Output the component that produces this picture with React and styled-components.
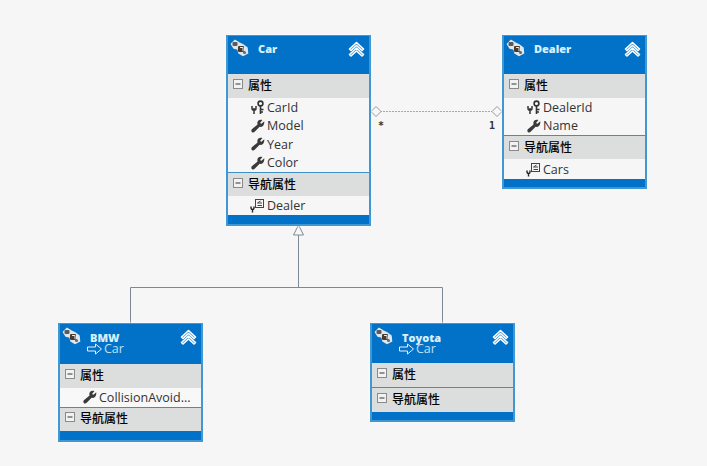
import React from "react";
import styled, { createGlobalStyle } from "styled-components";

const Global = createGlobalStyle`
  html, body { margin: 0; padding: 0; background: #f6f6f7; }
  #root { width: 707px; height: 466px; overflow: hidden; }
`;

const Canvas = styled.div`
  position: relative;
  width: 707px;
  height: 466px;
  background: #f6f6f7;
  overflow: hidden;
  font-family: "Open Sans", "Noto Sans CJK SC", sans-serif;
`;

const Connectors = styled.svg`
  position: absolute;
  left: 0;
  top: 0;
`;

const Entity = styled.div`
  position: absolute;
  left: ${(p) => p.$x}px;
  top: ${(p) => p.$y}px;
  width: 145px;
  box-sizing: border-box;
  display: flex;
  flex-direction: column;
  border: 2px solid #3f97d3;
  border-top-width: 1px;
  background: #f6f6f7;
  box-shadow: 0 0 3px rgba(255, 255, 255, 0.9);
`;

const Header = styled.div`
  height: ${(p) => p.$h}px;
  background: #0272c8;
  display: flex;
  align-items: flex-start;
  padding: 3px 4px 0 2px;
  box-sizing: border-box;
`;

const HeaderText = styled.div`
  flex: 1;
  margin-left: 8px;
  display: flex;
  flex-direction: column;
`;

const Title = styled.div`
  color: #d8effd;
  font-family: "Open Sans", sans-serif;
  font-weight: 800;
  font-size: 11px;
  line-height: 11px;
  margin-top: ${(p) => p.$top}px;
`;

const Base = styled.div`
  display: flex;
  align-items: center;
  gap: 1px;
  margin-left: -3px;
  color: #bfe0f6;
  font-size: 12.5px;
  line-height: 12px;
`;

const Section = styled.div`
  height: ${(p) => p.$h || 24}px;
  background: #dcdddd;
  display: flex;
  align-items: center;
  gap: 1px;
  padding: 0 0 3px 5px;
  color: #000;
  font-size: 12px;
  font-weight: 500;
  font-family: "Noto Sans CJK SC", sans-serif;
  box-sizing: border-box;
  border-top: ${(p) => (p.$rule ? "1px solid #3f8fc4" : "0")};
`;

const Rows = styled.div`
  display: flex;
  flex-direction: column;
  background: #f6f6f7;
`;

const Row = styled.div`
  height: ${(p) => p.$h || 18.5}px;
  display: flex;
  align-items: center;
  padding-left: 22px;
  color: #333;
  font-size: 12.5px;
  white-space: nowrap;
  background: ${(p) => p.$bg || "transparent"};
`;

const IconSlot = styled.span`
  width: 16px;
  height: 16px;
  margin-right: 1px;
  display: inline-flex;
  align-items: center;
  justify-content: center;
  flex: none;
`;

const Footer = styled.div`
  height: ${(p) => p.$h}px;
  background: #0272c8;
`;

const Mult = styled.span`
  position: absolute;
  left: ${(p) => p.$x}px;
  top: ${(p) => p.$y}px;
  font-family: "DejaVu Sans Mono", monospace;
  font-weight: 700;
  font-size: 10px;
  line-height: 12px;
  color: #333;
`;

const EntityIcon = () => (
  <svg width="20" height="18" viewBox="0 0 20 18" style={{ flex: "none" }}>
    <path d="M1.5 5 L5 1.5 L9 4 L13 6 L17 9 L17.5 14 L13 16.5 L9 14 L8 10 L4 9 Z" fill="#dfe8ee" stroke="#dfe8ee" strokeWidth="1.5" />
    <rect x="2.5" y="3" width="5" height="4" rx="1" fill="#5a5a5a" />
    <rect x="8" y="7" width="6" height="6" rx="1" fill="#4c3a2c" />
    <path d="M10 8.5h3v3.5" stroke="#dfe8ee" strokeWidth="1" fill="none" />
    <circle cx="14.5" cy="13.5" r="1.5" fill="#666" />
  </svg>
);

const Chevrons = () => (
  <svg width="17" height="17" viewBox="0 0 17 17" style={{ flex: "none", marginTop: 2 }}>
    <path d="M1.5 8 L8.5 1.5 L15.5 8 L14 9.5 L8.5 4.5 L3 9.5 Z" fill="#4b95cf" stroke="#fff" strokeWidth="1.6" strokeLinejoin="round" />
    <path d="M1.5 13.5 L8.5 7 L15.5 13.5 L14 15 L8.5 10 L3 15 Z" fill="#4b95cf" stroke="#fff" strokeWidth="1.6" strokeLinejoin="round" />
  </svg>
);

const MinusBox = () => (
  <svg width="11" height="11" viewBox="0 0 11 11" style={{ flex: "none", marginRight: 3 }}>
    <rect x="0.5" y="0.5" width="9" height="9" fill="#f2f2f2" stroke="#8a8a8a" />
    <path d="M2.5 5h5" stroke="#333" strokeWidth="1" />
  </svg>
);

const Wrench = () => (
  <svg width="14" height="14" viewBox="0 0 13 13">
    <path d="M12.3 2 L9.7 4.4 L8.4 3.6 L10.6 1 C8.4 0 6 1.2 5.9 3.4 C5.8 4.2 6 4.6 6.1 5 L0.8 9.6 C0 10.6 0.2 11.6 1 12.2 C1.6 12.8 2.7 12.6 3.4 11.9 L8 7.2 C10.2 7.8 12.8 6 12.3 2 Z" fill="#3a3a3a" />
  </svg>
);

const KeyWrench = () => (
  <svg width="14" height="15" viewBox="0 0 14 15">
    <circle cx="9.5" cy="3.5" r="2.4" fill="none" stroke="#333" strokeWidth="1.6" />
    <path d="M9.5 6v8 M9.5 9.5h3 M9.5 12h2.5" stroke="#333" strokeWidth="1.6" />
    <path d="M1 6v2.2c0 1.4 1 2 2 2s2-.6 2-2V6 M3 8v6" stroke="#333" strokeWidth="1.5" fill="none" />
  </svg>
);

const NavIcon = () => (
  <svg width="16" height="15" viewBox="0 0 16 15">
    <rect x="5.5" y="1.5" width="8" height="8" fill="#f6f6f7" stroke="#444" />
    <path d="M10.5 3 L7.500 5 H12 M7.500 7.500h4.500" stroke="#444" fill="none" />
    <path d="M1 8.500v1.500c0 1 1 1.500 1.500 1.500s1.500-.5 1.500-1.500V8.500 M2.500 11v3.500" stroke="#222" strokeWidth="1.4" fill="none" />
  </svg>
);

const InheritArrow = () => (
  <svg width="16" height="12" viewBox="0 0 16 12" style={{ flex: "none" }}>
    <path d="M0.5 4h8V1L14.5 6 8.500 11V8H0.500Z" fill="#0272c8" stroke="#e4f2fb" strokeWidth="1" />
  </svg>
);

const icons = { key: <KeyWrench />, wrench: <Wrench />, nav: <NavIcon /> };

const Prop = ({ icon, children, ...rest }) => (
  <Row {...rest}>
    <IconSlot>{icons[icon]}</IconSlot>
    {children}
  </Row>
);

const SectionHead = ({ children, ...rest }) => (
  <Section {...rest}>
    <MinusBox />
    {children}
  </Section>
);

const Head = ({ name, base, h }) => (
  <Header $h={h}>
    <EntityIcon />
    <HeaderText>
      <Title $top={base ? 5 : 4}>{name}</Title>
      {base && (
        <Base>
          <InheritArrow />
          {base}
        </Base>
      )}
    </HeaderText>
    <Chevrons />
  </Header>
);

export default function App() {
  return (
    <Canvas>
      <Global />
      <Connectors width="707" height="466" viewBox="0 0 707 466">
        <path d="M380 111.500H492" stroke="#a9a9a9" strokeWidth="1" strokeDasharray="2 1" fill="none" />
        <path d="M371 111.500l5-5 5 5-5 5z M492 111.500l5-5 5 5-5 5z" fill="#f7f7f7" stroke="#9a9a9a" />
        <path d="M298.500 235V287.500 M130.500 323V287.500H442.500V323" stroke="#7d8a96" strokeWidth="1" fill="none" />
        <path d="M298.500 225l5 10h-10z" fill="#f7f7f7" stroke="#7d8a96" />
      </Connectors>

      <Entity $x={226} $y={35}>
        <Head name="Car" h={38} />
        <SectionHead>属性</SectionHead>
        <Rows>
          <Prop icon="key">CarId</Prop>
          <Prop icon="wrench">Model</Prop>
          <Prop icon="wrench">Year</Prop>
          <Prop icon="wrench">Color</Prop>
        </Rows>
        <SectionHead $rule>导航属性</SectionHead>
        <Rows>
          <Prop icon="nav" $h={19}>Dealer</Prop>
        </Rows>
        <Footer $h={9} />
      </Entity>

      <Entity $x={502} $y={35}>
        <Head name="Dealer" h={38} />
        <SectionHead>属性</SectionHead>
        <Rows>
          <Prop icon="key">DealerId</Prop>
          <Prop icon="wrench">Name</Prop>
        </Rows>
        <SectionHead $rule>导航属性</SectionHead>
        <Rows>
          <Prop icon="nav" $h={20}>Cars</Prop>
        </Rows>
        <Footer $h={8} />
      </Entity>

      <Entity $x={58} $y={323}>
        <Head name="BMW" base="Car" h={40} />
        <SectionHead>属性</SectionHead>
        <Rows>
          <Prop icon="wrench" $bg="#f8f8f8">CollisionAvoid...</Prop>
        </Rows>
        <SectionHead $rule>导航属性</SectionHead>
        <Footer $h={9} />
      </Entity>

      <Entity $x={370} $y={323}>
        <Head name="Toyota" base="Car" h={39} />
        <SectionHead>属性</SectionHead>
        <SectionHead $rule $h={25}>导航属性</SectionHead>
        <Footer $h={8} />
      </Entity>

      <Mult $x={378} $y={120}>*</Mult>
      <Mult $x={489} $y={120}>1</Mult>
    </Canvas>
  );
}
